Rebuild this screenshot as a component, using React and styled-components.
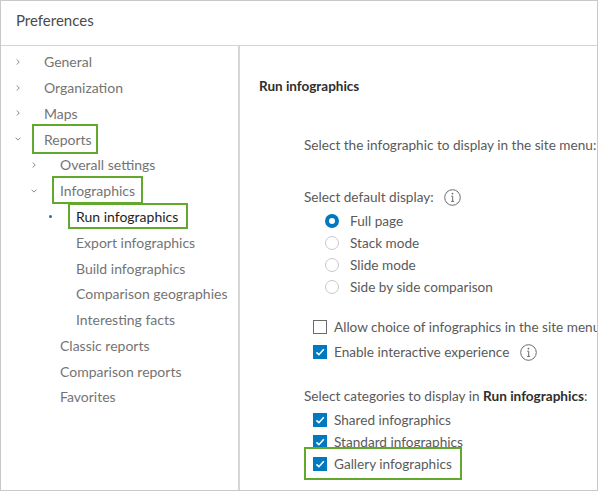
import styled, { createGlobalStyle } from 'styled-components';

const GlobalStyle = createGlobalStyle`
  html, body {
    margin: 0;
    padding: 0;
    background: #ffffff;
  }
  body {
    font-family: Lato, "Open Sans", "Liberation Sans", sans-serif;
  }
`;

const GREEN = '#62a82d';
const BLUE = '#0079c1';

const Frame = styled.div`
  width: 598px;
  height: 491px;
  box-sizing: border-box;
  border: 1px solid #c9c9c9;
  display: flex;
  flex-direction: column;
  overflow: hidden;
  background: #fff;
`;

const Header = styled.header`
  height: 45px;
  flex: none;
  box-sizing: border-box;
  border-bottom: 1px solid #d4d4d4;
  display: flex;
  align-items: center;
  padding: 0 0 6px 15px;
  font-size: 15px;
  color: #4a4a4a;
`;

const Body = styled.div`
  flex: 1;
  display: flex;
  min-height: 0;
`;

const Sidebar = styled.nav`
  width: 239px;
  flex: none;
  box-sizing: border-box;
  border-right: 2px solid #d6d6d6;
  padding-top: 3px;
`;

const NavRow = styled.div`
  height: 25.77px;
  display: flex;
  align-items: center;
  position: relative;
  padding-left: ${p => 43 + (p.$level || 0) * 16}px;
  font-size: 14px;
  color: ${p => (p.$active ? '#1e1e1e' : '#747474')};
  white-space: nowrap;
`;

const Marker = styled.span`
  position: absolute;
  left: ${p => 13 + (p.$level || 0) * 16}px;
  top: 50%;
  width: 8px;
  height: 8px;
  margin-top: -4px;
  display: flex;
  align-items: center;
  justify-content: center;
`;

const Dot = styled.span`
  width: 3px;
  height: 3px;
  border-radius: 50%;
  background: ${BLUE};
`;

const Highlight = styled.span`
  position: relative;
  &::after {
    content: '';
    position: absolute;
    left: -${p => p.$l}px;
    right: -${p => p.$r}px;
    top: -${p => p.$t}px;
    bottom: -${p => p.$b}px;
    border: 2px solid ${GREEN};
    pointer-events: none;
  }
`;

const Main = styled.main`
  flex: 1;
  min-width: 0;
  overflow: hidden;
  padding: 30px 0 0 19px;
  color: #5a5a5a;
  font-size: 13.6px;
  white-space: nowrap;
`;

const Title = styled.div`
  height: 20px;
  line-height: 20px;
  font-weight: 700;
  color: #2e2e2e;
  font-size: 13.5px;
`;

const Label = styled.div`
  height: 20px;
  display: flex;
  align-items: center;
  gap: 10px;
  margin-left: 45px;
  margin-top: ${p => p.$mt}px;
  b {
    color: #2e2e2e;
    font-weight: 700;
  }
`;

const OptionRow = styled.div`
  height: ${p => p.$h || 22}px;
  display: flex;
  align-items: center;
  margin-left: ${p => p.$indent}px;
  margin-top: ${p => p.$mt || 0}px;
  gap: ${p => p.$gap || 7}px;
`;

const Radio = styled.span`
  width: 14px;
  height: 14px;
  box-sizing: border-box;
  border-radius: 50%;
  flex: none;
  border: ${p => (p.$checked ? `4px solid ${BLUE}` : '1px solid #c8c8c8')};
  background: #fff;
`;

const Box = styled.span`
  width: 14px;
  height: 14px;
  box-sizing: border-box;
  flex: none;
  display: flex;
  align-items: center;
  justify-content: center;
  background: ${p => (p.$checked ? BLUE : '#fff')};
  border: ${p => (p.$checked ? 'none' : '1px solid #6b6b6b')};
`;

const InfoWrap = styled.span`
  display: flex;
  margin-left: ${p => p.$ml || 0}px;
`;

const Chevron = ({ down }) => (
  <svg width="8" height="8" viewBox="0 0 8 8">
    <path
      d={down ? 'M1.6 2.7 L4 5.1 L6.4 2.7' : 'M2.8 1.5 L5.2 4 L2.8 6.5'}
      fill="none"
      stroke="#8a8a8a"
      strokeWidth="1"
    />
  </svg>
);

const InfoIcon = () => (
  <svg width="17" height="17" viewBox="0 0 17 17">
    <circle cx="8.5" cy="8.5" r="7.8" fill="none" stroke="#6b6b6b" strokeWidth="1" />
    <circle cx="8.5" cy="4.6" r="0.9" fill="#6b6b6b" />
    <path d="M7.2 7.2 H8.7 V12.4 M7.1 12.4 H10.1" fill="none" stroke="#6b6b6b" strokeWidth="1" />
  </svg>
);

const Check = () => (
  <svg width="12" height="12" viewBox="0 0 12 12">
    <path d="M2.4 6.3 L4.9 8.7 L9.8 3.3" fill="none" stroke="#fff" strokeWidth="1.6" />
  </svg>
);

const navItems = [
  { text: 'General', level: 0, mark: 'right' },
  { text: 'Organization', level: 0, mark: 'right' },
  { text: 'Maps', level: 0, mark: 'right' },
  { text: 'Reports', level: 0, mark: 'down', hl: [12, 6, 7, 6] },
  { text: 'Overall settings', level: 1, mark: 'right' },
  { text: 'Infographics', level: 1, mark: 'down', hl: [8, 8, 6, 5] },
  { text: 'Run infographics', level: 2, mark: 'dot', active: true, hl: [8, 10, 5, 4] },
  { text: 'Export infographics', level: 2 },
  { text: 'Build infographics', level: 2 },
  { text: 'Comparison geographies', level: 2 },
  { text: 'Interesting facts', level: 2 },
  { text: 'Classic reports', level: 1 },
  { text: 'Comparison reports', level: 1 },
  { text: 'Favorites', level: 1 },
];

const radios = [
  { text: 'Full page', checked: true },
  { text: 'Stack mode' },
  { text: 'Slide mode' },
  { text: 'Side by side comparison' },
];

const NavItem = ({ item }) => {
  const [l, r, t, b] = item.hl || [];
  return (
    <NavRow $level={item.level} $active={item.active}>
      {item.mark && (
        <Marker $level={item.level}>
          {item.mark === 'dot' ? <Dot /> : <Chevron down={item.mark === 'down'} />}
        </Marker>
      )}
      {item.hl ? (
        <Highlight $l={l} $r={r} $t={t} $b={b}>{item.text}</Highlight>
      ) : (
        item.text
      )}
    </NavRow>
  );
};

export default function App() {
  return (
    <>
      <GlobalStyle />
      <Frame>
        <Header>Preferences</Header>
        <Body>
          <Sidebar>
            {navItems.map(item => (
              <NavItem key={item.text} item={item} />
            ))}
          </Sidebar>
          <Main>
            <Title>Run infographics</Title>
            <Label $mt={39}>Select the infographic to display in the site menu:</Label>
            <Label $mt={32}>
              Select default display: <InfoIcon />
            </Label>
            {radios.map((r, i) => (
              <OptionRow key={r.text} $indent={66} $mt={i === 0 ? 3 : 0} $gap={11}>
                <Radio $checked={r.checked} />
                {r.text}
              </OptionRow>
            ))}
            <OptionRow $indent={54} $mt={16.5} $h={25}>
              <Box />
              Allow choice of infographics in the site menu
            </OptionRow>
            <OptionRow $indent={54} $h={25}>
              <Box $checked><Check /></Box>
              Enable interactive experience
              <InfoWrap $ml={4}><InfoIcon /></InfoWrap>
            </OptionRow>
            <Label $mt={21.5}>
              <span>Select categories to display in <b>Run infographics</b>:</span>
            </Label>
            <OptionRow $indent={54} $mt={3}>
              <Box $checked><Check /></Box>
              Shared infographics
            </OptionRow>
            <OptionRow $indent={54}>
              <Box $checked><Check /></Box>
              Standard infographics
            </OptionRow>
            <OptionRow $indent={54}>
              <Highlight $l={9} $r={10} $t={6} $b={5}>
                <OptionRow $indent={0}>
                  <Box $checked><Check /></Box>
                  Gallery infographics
                </OptionRow>
              </Highlight>
            </OptionRow>
          </Main>
        </Body>
      </Frame>
    </>
  );
}
